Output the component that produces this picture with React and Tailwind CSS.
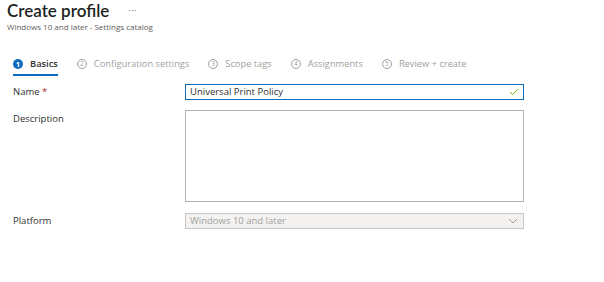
import React from 'react';

const steps = [
  { n: 1, label: 'Basics', active: true },
  { n: 2, label: 'Configuration settings' },
  { n: 3, label: 'Scope tags' },
  { n: 4, label: 'Assignments' },
  { n: 5, label: 'Review + create' },
];

export default function App() {
  return (
    <div className="w-[604px] h-[282px] bg-white text-[#323130] overflow-hidden" style={{ fontFamily: '"Open Sans", "Noto Sans", sans-serif' }}>
      {/* Header */}
      <div className="pl-[7px] pt-[1px]">
        <div className="flex items-center h-[20px]">
          <h1 className="text-[17px] leading-[20px] font-semibold text-[#201f1e]" style={{ fontFamily: 'Lato, "Open Sans", sans-serif' }}>Create profile</h1>
          <span className="ml-[19px] text-[9px] text-[#605e5c] tracking-[0.5px] -mt-[1px]">···</span>
        </div>
        <div className="text-[8px] leading-[12px] text-[#605e5c]">Windows 10 and later - Settings catalog</div>
      </div>

      {/* Wizard steps */}
      <div className="flex items-center pl-[13px] mt-[23px] h-[16px]">
        {steps.map((s) => (
          <div key={s.n} className="relative flex items-center mr-[19px] h-full">
            {s.active ? (
              <span className="w-[10px] h-[10px] rounded-full bg-[#0f6cbd] text-white text-[7px] font-bold flex items-center justify-center leading-none">{s.n}</span>
            ) : (
              <span className="w-[10px] h-[10px] rounded-full border border-[#a19f9d] text-[#a19f9d] text-[6.5px] flex items-center justify-center leading-none">{s.n}</span>
            )}
            <span className={`ml-[7px] text-[9.3px] ${s.active ? 'font-semibold text-[#323130]' : 'text-[#a19f9d]'}`}>{s.label}</span>
            {s.active && <div className="absolute left-0 right-0 -bottom-[4px] h-[2px] bg-[#0f6cbd]" />}
          </div>
        ))}
      </div>

      {/* Form */}
      <div className="mt-[12px] pl-[13px] flex flex-col">
        <div className="flex items-center h-[16px]">
          <label className="w-[172px] text-[9.5px]">Name <span className="text-[#a4262c]">*</span></label>
          <div className="w-[339px] h-[16px] border border-[#0f6cbd] flex items-center px-[4px]">
            <span className="text-[9.5px] flex-1">Universal Print Policy</span>
            <svg width="10" height="8" viewBox="0 0 10 8" fill="none"><path d="M1 4.2 3.6 6.6 9 1.2" stroke="#6bb700" strokeWidth="1" /></svg>
          </div>
        </div>

        <div className="flex mt-[10px]">
          <label className="w-[172px] text-[9.5px] pt-[2px]">Description</label>
          <div className="w-[339px] h-[92px] border border-[#b3b0ad]" />
        </div>

        <div className="flex items-center mt-[11px] h-[16px]">
          <label className="w-[172px] text-[9.5px]">Platform</label>
          <div className="w-[339px] h-[16px] border border-[#c8c6c4] bg-[#f3f2f1] flex items-center px-[4px]">
            <span className="text-[9.5px] text-[#a19f9d] flex-1">Windows 10 and later</span>
            <svg width="10" height="6" viewBox="0 0 10 6" fill="none" className="mr-[1px]"><path d="M1 1 5 5 9 1" stroke="#a19f9d" strokeWidth="1" /></svg>
          </div>
        </div>
      </div>
    </div>
  );
}
